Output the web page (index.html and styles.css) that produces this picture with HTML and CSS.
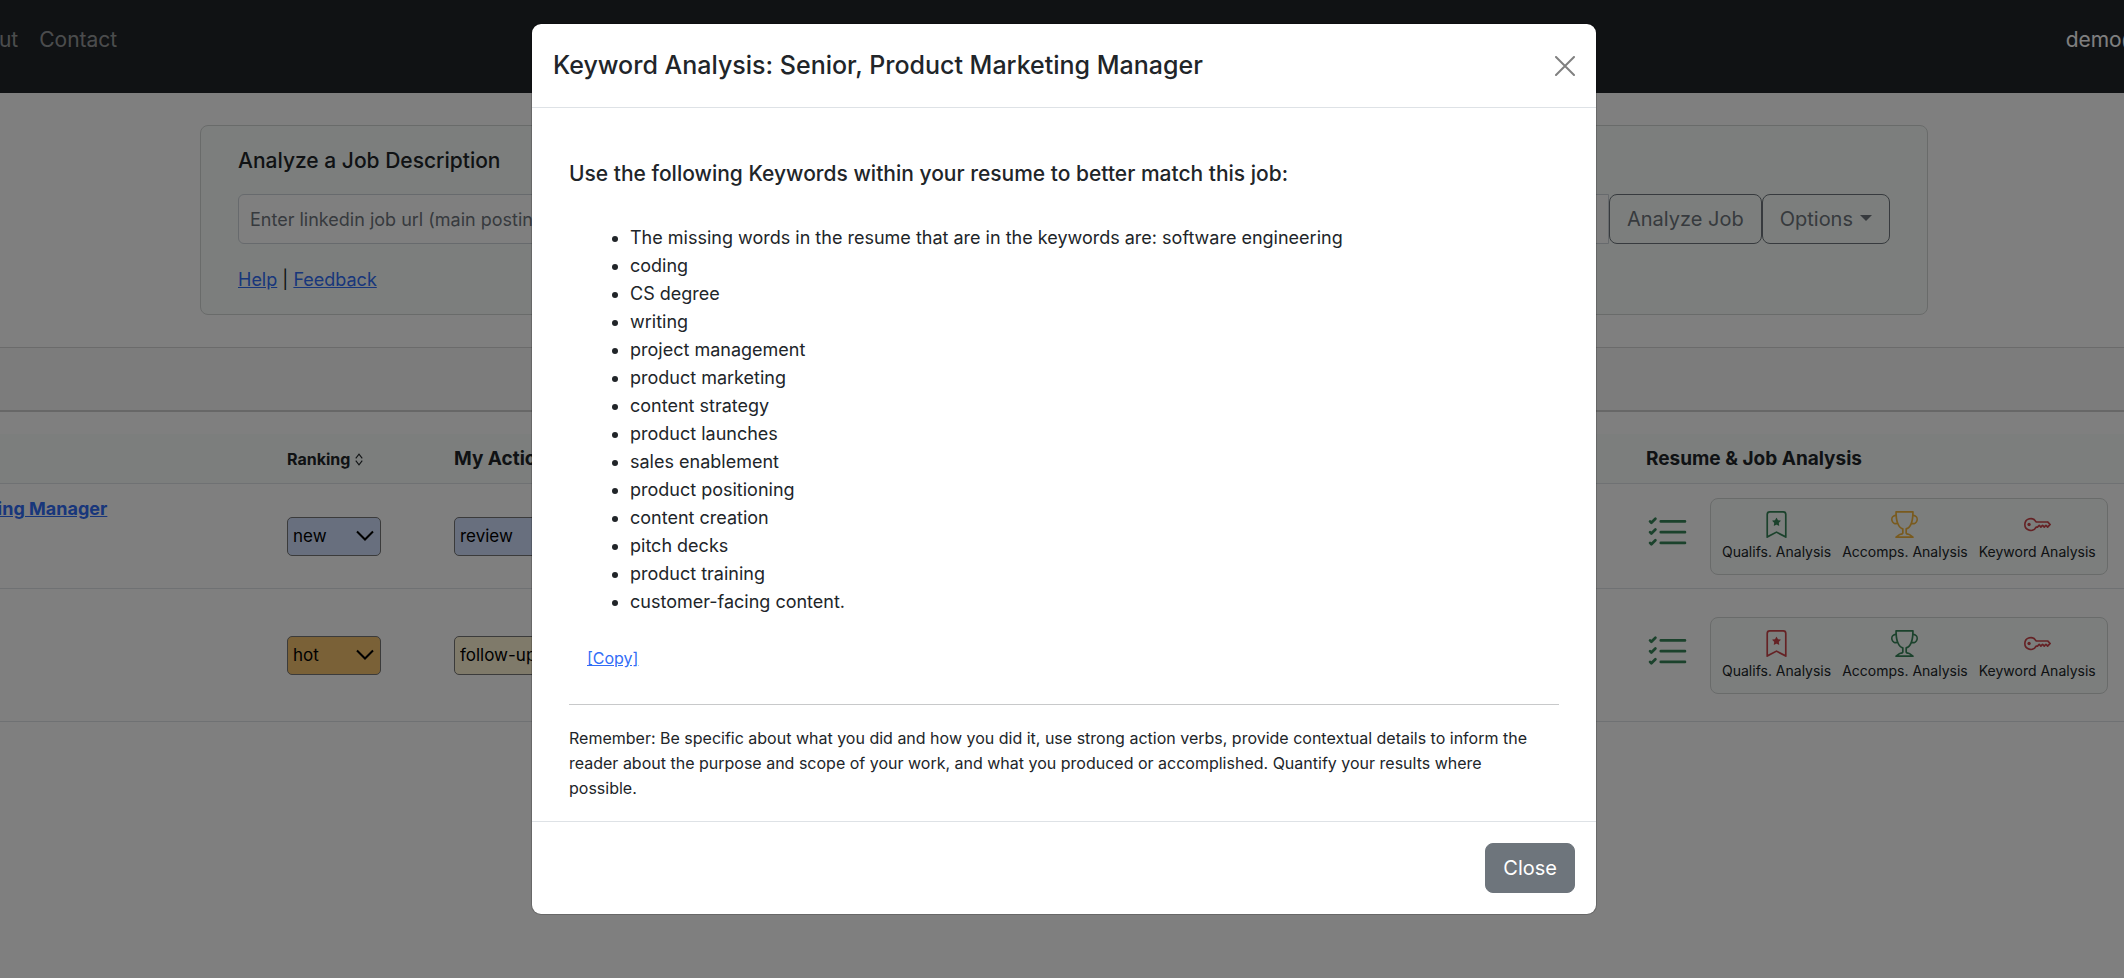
FILE: index.html
```html
<!DOCTYPE html>
<html lang="en">
<head>
    <meta charset="UTF-8">
    <meta name="viewport" content="width=device-width, initial-scale=1.0">
    <title>Keyword Analysis</title>
    <link rel="stylesheet" href="styles.css">
</head>
<body>
    <!-- Shared icons -->
    <svg class="icon-defs" aria-hidden="true">
        <symbol id="icon-checklist" viewBox="0 0 16 16">
            <path d="M5 11.5a.5.5 0 0 1 .5-.5h9a.5.5 0 0 1 0 1h-9a.5.5 0 0 1-.5-.5zm0-4a.5.5 0 0 1 .5-.5h9a.5.5 0 0 1 0 1h-9a.5.5 0 0 1-.5-.5zm0-4a.5.5 0 0 1 .5-.5h9a.5.5 0 0 1 0 1h-9a.5.5 0 0 1-.5-.5zM3.854 2.146a.5.5 0 0 1 0 .708l-1.5 1.5a.5.5 0 0 1-.708 0l-.5-.5a.5.5 0 1 1 .708-.708L2 3.293l1.146-1.147a.5.5 0 0 1 .708 0zm0 4a.5.5 0 0 1 0 .708l-1.5 1.5a.5.5 0 0 1-.708 0l-.5-.5a.5.5 0 1 1 .708-.708L2 7.293l1.146-1.147a.5.5 0 0 1 .708 0zm0 4a.5.5 0 0 1 0 .708l-1.5 1.5a.5.5 0 0 1-.708 0l-.5-.5a.5.5 0 0 1 .708-.708l.146.147 1.146-1.147a.5.5 0 0 1 .708 0z"/>
        </symbol>
        <symbol id="icon-bookmark" viewBox="0 0 16 16">
            <path d="M7.84 4.1a.178.178 0 0 1 .32 0l.634 1.285a.178.178 0 0 0 .134.098l1.42.206c.145.021.204.2.098.303L9.42 6.993a.178.178 0 0 0-.051.158l.242 1.414a.178.178 0 0 1-.258.187l-1.27-.668a.178.178 0 0 0-.165 0l-1.27.668a.178.178 0 0 1-.257-.187l.242-1.414a.178.178 0 0 0-.05-.158l-1.03-1.001a.178.178 0 0 1 .098-.303l1.42-.206a.178.178 0 0 0 .134-.098L7.84 4.1z"/>
            <path d="M2 2a2 2 0 0 1 2-2h8a2 2 0 0 1 2 2v13.5a.5.5 0 0 1-.777.416L8 13.101l-5.223 2.815A.5.5 0 0 1 2 15.5V2zm2-1a1 1 0 0 0-1 1v12.566l4.723-2.482a.5.5 0 0 1 .554 0L13 14.566V2a1 1 0 0 0-1-1H4z"/>
        </symbol>
        <symbol id="icon-trophy" viewBox="0 0 16 16">
            <path d="M2.5.5A.5.5 0 0 1 3 0h10a.5.5 0 0 1 .5.5c0 .538-.012 1.05-.034 1.536a3 3 0 1 1-1.133 5.89c-.79 1.865-1.878 2.777-2.833 3.011v2.173l1.425.356c.194.048.377.135.537.255L13.3 15.1a.5.5 0 0 1-.3.9H3a.5.5 0 0 1-.3-.9l1.838-1.379c.16-.12.343-.207.537-.255L6.5 13.11v-2.173c-.955-.234-2.043-1.146-2.833-3.012a3 3 0 1 1-1.132-5.89A33.076 33.076 0 0 1 2.5.5zm.099 2.54a2 2 0 0 0 .72 3.935c-.333-1.05-.588-2.346-.72-3.935zm10.083 3.935a2 2 0 0 0 .72-3.935c-.133 1.59-.388 2.885-.72 3.935zM3.504 1c.007.517.026 1.006.056 1.469.13 2.028.457 3.546.87 4.667C5.294 9.48 6.484 10 7 10a.5.5 0 0 1 .5.5v2.61a1 1 0 0 1-.757.97l-1.426.356a.5.5 0 0 0-.179.085L4.5 15h7l-.638-.479a.501.501 0 0 0-.18-.085l-1.425-.356a1 1 0 0 1-.757-.97V10.5A.5.5 0 0 1 9 10c.516 0 1.706-.52 2.57-2.864.413-1.12.74-2.64.87-4.667.03-.463.049-.952.056-1.469H3.504z"/>
        </symbol>
        <symbol id="icon-key" viewBox="0 0 16 16">
            <path d="M0 8a4 4 0 0 1 7.465-2H14a.5.5 0 0 1 .354.146l1.5 1.5a.5.5 0 0 1 0 .708l-1.5 1.5a.5.5 0 0 1-.708 0L13 9.207l-.646.647a.5.5 0 0 1-.708 0L11 9.207l-.646.647a.5.5 0 0 1-.708 0L9 9.207l-.646.647A.5.5 0 0 1 8 10h-.535A4 4 0 0 1 0 8zm4-3a3 3 0 1 0 2.712 4.285A.5.5 0 0 1 7.163 9h.63l.853-.854a.5.5 0 0 1 .708 0l.646.647.646-.647a.5.5 0 0 1 .708 0l.646.647.646-.647a.5.5 0 0 1 .708 0l.646.647.793-.793-1-1h-6.63a.5.5 0 0 1-.451-.285A3 3 0 0 0 4 5z"/>
            <path d="M4 8a1 1 0 1 1-2 0 1 1 0 0 1 2 0z"/>
        </symbol>
    </svg>

    <div class="app">
        <nav class="navbar">
            <a class="nav-link" href="#">About</a>
            <a class="nav-link" href="#">Contact</a>
            <span class="nav-user">demo@</span>
        </nav>

        <main>
            <section class="analyze-card">
                <h2 class="analyze-title"><label for="job-url">Analyze a Job Description</label></h2>
                <form class="input-group">
                    <input type="text" id="job-url" class="form-control" placeholder="Enter linkedin job url (main posting)">
                    <button type="button" class="btn btn-outline">Analyze Job</button>
                    <button type="button" class="btn btn-outline btn-dropdown">Options</button>
                </form>
                <p class="analyze-links"><a href="#">Help</a> | <a href="#">Feedback</a></p>
            </section>

            <div class="toolbar"></div>

            <table class="jobs-table">
                <colgroup>
                    <col class="col-title">
                    <col class="col-ranking">
                    <col class="col-action">
                    <col class="col-analysis">
                </colgroup>
                <thead>
                    <tr>
                        <th></th>
                        <th>
                            <span class="sortable">Ranking
                                <svg class="sort-icon" viewBox="0 0 8 12" aria-hidden="true"><path d="M1 5l3-4 3 4M1 7l3 4 3-4"/></svg>
                            </span>
                        </th>
                        <th>My Actions</th>
                        <th>Resume &amp; Job Analysis</th>
                    </tr>
                </thead>
                <tbody>
                    <tr class="job-row">
                        <td class="job-title"><a href="#">Senior, Product Marketing Manager</a></td>
                        <td>
                            <select class="status status-blue" aria-label="Ranking">
                                <option>new</option>
                            </select>
                        </td>
                        <td>
                            <select class="status status-blue status-wide" aria-label="My action">
                                <option>review</option>
                            </select>
                        </td>
                        <td>
                            <div class="analysis">
                                <a class="checklist" href="#" aria-label="Checklist"><svg><use href="#icon-checklist"/></svg></a>
                                <div class="analysis-box">
                                    <button type="button" class="analysis-btn"><svg class="success"><use href="#icon-bookmark"/></svg>Qualifs. Analysis</button>
                                    <button type="button" class="analysis-btn"><svg class="warning"><use href="#icon-trophy"/></svg>Accomps. Analysis</button>
                                    <button type="button" class="analysis-btn"><svg class="danger"><use href="#icon-key"/></svg>Keyword Analysis</button>
                                </div>
                            </div>
                        </td>
                    </tr>
                    <tr class="job-row job-row-tall">
                        <td></td>
                        <td>
                            <select class="status status-orange" aria-label="Ranking">
                                <option>hot</option>
                            </select>
                        </td>
                        <td>
                            <select class="status status-cream status-wide" aria-label="My action">
                                <option>follow-up</option>
                            </select>
                        </td>
                        <td>
                            <div class="analysis">
                                <a class="checklist" href="#" aria-label="Checklist"><svg><use href="#icon-checklist"/></svg></a>
                                <div class="analysis-box">
                                    <button type="button" class="analysis-btn"><svg class="danger"><use href="#icon-bookmark"/></svg>Qualifs. Analysis</button>
                                    <button type="button" class="analysis-btn"><svg class="success"><use href="#icon-trophy"/></svg>Accomps. Analysis</button>
                                    <button type="button" class="analysis-btn"><svg class="danger"><use href="#icon-key"/></svg>Keyword Analysis</button>
                                </div>
                            </div>
                        </td>
                    </tr>
                </tbody>
            </table>
        </main>

        <div class="modal-backdrop">
            <div class="modal" role="dialog" aria-labelledby="modal-title">
                <div class="modal-header">
                    <h1 class="modal-title" id="modal-title">Keyword Analysis: Senior, Product Marketing Manager</h1>
                    <button type="button" class="btn-close" aria-label="Close">
                        <svg viewBox="0 0 20 20"><path d="M1 1l18 18M19 1L1 19"/></svg>
                    </button>
                </div>
                <div class="modal-body">
                    <h2 class="keywords-title">Use the following Keywords within your resume to better match this job:</h2>
                    <ul class="keywords">
                        <li>The missing words in the resume that are in the keywords are: software engineering</li>
                        <li>coding</li>
                        <li>CS degree</li>
                        <li>writing</li>
                        <li>project management</li>
                        <li>product marketing</li>
                        <li>content strategy</li>
                        <li>product launches</li>
                        <li>sales enablement</li>
                        <li>product positioning</li>
                        <li>content creation</li>
                        <li>pitch decks</li>
                        <li>product training</li>
                        <li>customer-facing content.</li>
                    </ul>
                    <a class="copy-link" href="#">[Copy]</a>
                    <hr>
                    <p class="reminder">Remember: Be specific about what you did and how you did it, use strong action verbs, provide contextual details to inform the reader about the purpose and scope of your work, and what you produced or accomplished. Quantify your results where possible.</p>
                </div>
                <div class="modal-footer">
                    <button type="button" class="btn btn-secondary">Close</button>
                </div>
            </div>
        </div>
    </div>
</body>
</html>
```
FILE: styles.css
```css
* {
    box-sizing: border-box;
}
body {
    margin: 0;
    overflow: hidden;
    background-color: #ffffff;
    color: #212529;
    font-family: Inter, 'Liberation Sans', sans-serif;
    font-size: 18px;
    line-height: 28px;
}
a {
    color: #316df6;
}
h1, h2, p {
    margin: 0;
}
h1, h2 {
    font-weight: 500;
}
button, input, select {
    font-family: inherit;
}
.icon-defs {
    display: none;
}

/* The app is wider than the window and is scrolled to its middle */
.app {
    position: relative;
    min-height: 100vh;
    margin: 0 -232px 0 -228px;
}

.navbar {
    display: flex;
    align-items: flex-start;
    gap: 21px;
    padding: 24px 214px 37px 187px;
    background-color: #212529;
    font-size: 21px;
    line-height: 32px;
}
.nav-link {
    color: rgba(255, 255, 255, 0.55);
    text-decoration: none;
}
.nav-user {
    margin-left: auto;
    color: #ffffff;
}

.analyze-card {
    max-width: 1728px;
    margin: 32px auto;
    padding: 20px 37px;
    border: 1px solid #d3d6d5;
    border-radius: 8px;
    background-color: #f8fdfa;
}
.analyze-title {
    margin-bottom: 18px;
    font-size: 21px;
    line-height: 30px;
}
.input-group {
    display: flex;
}
.form-control {
    flex: 1;
    padding: 0 11px;
    border: 1px solid #ced4da;
    border-radius: 6px 0 0 6px;
    background-color: #ffffff;
    font-size: 18px;
}
.form-control::placeholder {
    color: #6e757c;
    opacity: 1;
}
.btn {
    padding: 8px 17px;
    border: 1px solid #6e757c;
    border-radius: 8px;
    font-size: 20px;
    line-height: 32px;
    cursor: pointer;
}
.btn-outline {
    background-color: transparent;
    color: #6e757c;
}
.btn-dropdown::after {
    content: "";
    display: inline-block;
    margin-left: 7px;
    vertical-align: 5px;
    border-top: 6px solid;
    border-right: 6px solid transparent;
    border-left: 6px solid transparent;
}
.btn-secondary {
    background-color: #6e757c;
    color: #ffffff;
}
.analyze-links {
    padding-top: 22px;
}

.toolbar {
    height: 65px;
    margin-bottom: 22px;
    border-top: 1px solid #d6d6d6;
    border-bottom: 2px solid #cecece;
    background-color: #f8f8f8;
}

.jobs-table {
    width: 100%;
    table-layout: fixed;
    border-collapse: collapse;
}
.jobs-table th,
.jobs-table td {
    padding: 11px;
    border-bottom: 1px solid #dee2e6;
    text-align: left;
}
.jobs-table th {
    padding-bottom: 10px;
    background-color: #f8fdfa;
    font-size: 19px;
    font-weight: 700;
}
.col-title {
    width: 504px;
}
.col-ranking {
    width: 167px;
}
.col-analysis {
    width: 721px;
}
.sortable {
    display: flex;
    align-items: center;
    gap: 4px;
    font-size: 16px;
}
.sort-icon {
    width: 10px;
    height: 13px;
    fill: none;
    stroke: #212529;
}
.job-row {
    height: 105px;
}
.job-row-tall {
    height: 133px;
}
.jobs-table .job-title {
    padding-left: 24px;
    vertical-align: top;
    font-weight: 700;
}
.status {
    display: block;
    width: 94px;
    height: 39px;
    padding: 0 5px;
    border: 1px solid #767676;
    border-radius: 5px;
    appearance: none;
    background-image: url("data:image/svg+xml,%3Csvg xmlns='http://www.w3.org/2000/svg' viewBox='0 0 18 12'%3E%3Cpath d='M1 1.5l8 8 8-8' fill='none' stroke='%23000' stroke-width='2'/%3E%3C/svg%3E");
    background-repeat: no-repeat;
    background-position: right 6px center;
    background-size: 18px 12px;
    color: #000000;
    font-size: 17px;
}
.status-wide {
    width: 160px;
}
.status-blue {
    background-color: #d0dffc;
}
.status-orange {
    background-color: #f4c26e;
}
.status-cream {
    background-color: #fef4d4;
}
.analysis {
    display: flex;
    align-items: center;
    gap: 21px;
}
.checklist {
    display: flex;
    padding-bottom: 6px;
}
.checklist svg {
    width: 43px;
    height: 43px;
    fill: #368458;
}
.analysis-box {
    display: flex;
    gap: 11px;
    padding: 12px 11px;
    border: 1px solid #d3d6d5;
    border-radius: 8px;
    background-color: #f8fdfa;
}
.analysis-btn {
    display: flex;
    flex-direction: column;
    align-items: center;
    gap: 4px;
    padding: 0;
    border: none;
    background: none;
    color: #212529;
    font-size: 14px;
    line-height: 20px;
    cursor: pointer;
}
.analysis-btn svg {
    width: 27px;
    height: 27px;
}
.success {
    fill: #368458;
}
.warning {
    fill: #f2b53c;
}
.danger {
    fill: #cb444a;
}

.modal-backdrop {
    position: absolute;
    inset: 0;
    padding-top: 23px;
    background-color: rgba(0, 0, 0, 0.5);
}
.modal {
    max-width: 1066px;
    margin: 0 auto;
    border: 1px solid rgba(0, 0, 0, 0.175);
    border-radius: 10px;
    background-color: #ffffff;
    background-clip: padding-box;
}
.modal-header {
    display: flex;
    align-items: center;
    justify-content: space-between;
    padding: 21px;
    border-bottom: 1px solid #dee2e6;
}
.modal-title {
    font-size: 25px;
    line-height: 41px;
}
.btn-close {
    display: flex;
    padding: 0;
    border: none;
    background: none;
    cursor: pointer;
}
.btn-close svg {
    width: 20px;
    height: 20px;
    fill: none;
    stroke: #808080;
    stroke-width: 2;
    stroke-linecap: round;
}
.modal-body {
    padding: 50px 37px 20px;
}
.keywords-title {
    margin-bottom: 34px;
    font-size: 21px;
    line-height: 32px;
}
.keywords {
    margin: 0 0 28px;
    padding-left: 61px;
}
.copy-link {
    display: block;
    width: fit-content;
    margin-left: 18px;
    font-size: 16px;
}
hr {
    margin: 32px 0 21px;
    border: none;
    border-top: 1px solid #c8c9ca;
}
.reminder {
    padding-right: 16px;
    font-size: 16px;
    line-height: 25px;
}
.modal-footer {
    display: flex;
    justify-content: flex-end;
    padding: 21px;
    border-top: 1px solid #dee2e6;
}
```
